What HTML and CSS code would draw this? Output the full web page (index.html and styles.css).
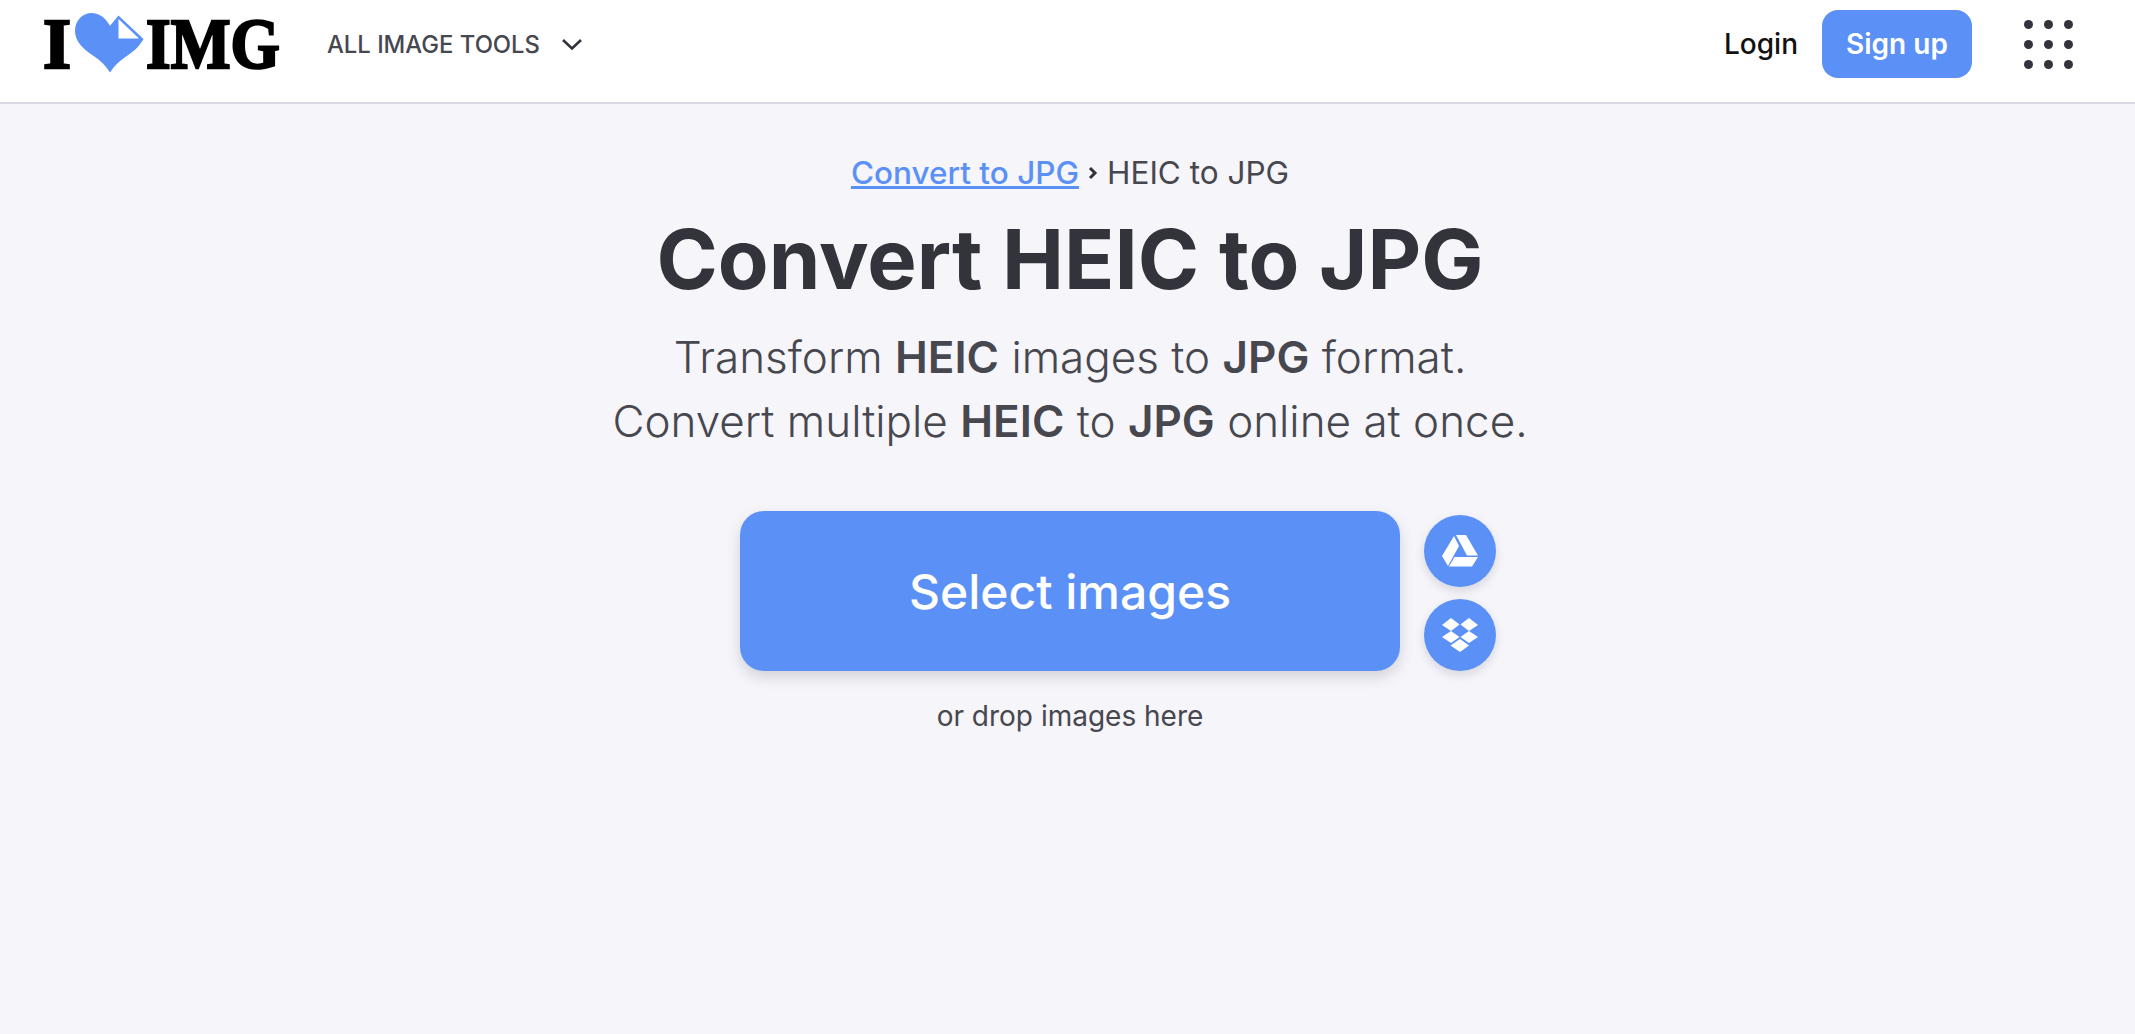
FILE: index.html
```html
<!DOCTYPE html>
<html lang="en">
<head>
  <meta charset="UTF-8">
  <meta name="viewport" content="width=device-width, initial-scale=1">
  <title>Convert HEIC to JPG</title>
  <link rel="stylesheet" href="styles.css">
</head>
<body>
  <header class="header">
    <a class="logo" href="#">
      <span class="logo-text logo-i">I</span>
      <svg class="logo-heart" width="70" height="60" viewBox="0 0 70 60">
        <path d="M35 12.7C30 4 23 0 16.7 0C7 0 0 8 0 18C0 27 6 35 18.3 42.7C25 47 31 53 35 59.5C39 53 44 48.5 50 44.3C58 39 64 34 68.5 26L43.5 2.5Z" fill="#5b91f7"/>
        <path d="M43.5 6L64 25.5H43.5Z" fill="#fff"/>
      </svg>
      <span class="logo-text logo-img">IMG</span>
    </a>
    <nav class="tools-menu">
      <span>ALL IMAGE TOOLS</span>
      <svg class="chevron" width="22" height="14" viewBox="0 0 22 14">
        <path d="M2 3l9 8.5L20 3" fill="none" stroke="#33333b" stroke-width="2.6"/>
      </svg>
    </nav>
    <div class="header-right">
      <a class="login" href="#">Login</a>
      <a class="signup" href="#">Sign up</a>
      <div class="apps">
        <i></i><i></i><i></i><i></i><i></i><i></i><i></i><i></i><i></i>
      </div>
    </div>
  </header>

  <main class="main">
    <div class="breadcrumb">
      <a href="#">Convert to JPG</a>
      <svg class="crumb-arrow" width="10" height="14" viewBox="0 0 10 14">
        <path d="M2 2l5 5-5 5" fill="none" stroke="#33333b" stroke-width="3"/>
      </svg>
      <span>HEIC to JPG</span>
    </div>
    <h1>Convert HEIC to JPG</h1>
    <p class="subtitle">Transform <b>HEIC</b> images to <b>JPG</b> format.<br>Convert multiple <b>HEIC</b> to <b>JPG</b> online at once.</p>

    <div class="upload">
      <a class="select-btn" href="#">Select images</a>
      <div class="cloud-btns">
        <a class="cloud-btn" href="#">
          <svg width="36" height="32" viewBox="0 0 36 32" fill="#fff">
            <path d="M12 1L17 11 6 31 0 21Z"/>
            <path d="M14 0H24L36 20.5H25Z"/>
            <path d="M12.5 22H36L30 31.500H7Z"/>
          </svg>
        </a>
        <a class="cloud-btn" href="#">
          <svg width="36" height="34" viewBox="0 0 36 34" fill="#fff">
            <path d="M0 7L9 0l8.500 6.500L9 13Z"/>
            <path d="M18.500 6.500L27 0l9 7-9 6Z"/>
            <path d="M0 19l9-6 8.500 6L9 25Z"/>
            <path d="M18.500 19l8.500-6 9 6-9 6Z"/>
            <path d="M18 21l9 6.500L18 34 8.500 27.500Z"/>
          </svg>
        </a>
      </div>
    </div>
    <p class="drop-hint">or drop images here</p>
  </main>
</body>
</html>
```

FILE: styles.css
```css
* {
  box-sizing: border-box;
}
html, body {
  height: 100%;
}
body {
  margin: 0;
  background-color: #f5f5fa;
  font-family: Inter, "Noto Sans", sans-serif;
  color: #47474f;
  overflow: hidden;
}
a {
  text-decoration: none;
}

/* Header */
.header {
  display: flex;
  align-items: center;
  height: 104px;
  padding: 0 0 14px 43px;
  background-color: #fff;
  border-bottom: 2px solid #d9d9e3;
}
.logo {
  display: flex;
  align-items: center;
  flex: none;
  width: 237px;
  height: 88px;
  color: #000;
}
.logo-text {
  flex: none;
  font-family: "Liberation Serif", serif;
  font-size: 72px;
  line-height: 1;
  font-weight: 700;
  -webkit-text-stroke: 2.5px #000;
  transform-origin: left center;
}
.logo-i {
  width: 32px;
}
.logo-img {
  transform: scaleX(0.88);
}
.logo-heart {
  margin: -2px 1px 0 0;
  flex: none;
}
.tools-menu {
  display: flex;
  align-items: center;
  margin-left: 47px;
  font-size: 23.8px;
  font-weight: 500;
}
.chevron {
  margin-left: 21px;
}
.header-right {
  display: flex;
  align-items: center;
  margin-left: auto;
  padding-right: 62px;
}
.login {
  font-size: 28px;
  font-weight: 500;
  color: #111;
}
.signup {
  display: flex;
  align-items: center;
  justify-content: center;
  width: 150px;
  height: 68px;
  margin-left: 24px;
  background-color: #5b91f7;
  border-radius: 16px;
  color: #fff;
  font-size: 28px;
  font-weight: 600;
}
.apps {
  display: grid;
  grid-template-columns: repeat(3, 9px);
  gap: 11px;
  margin-left: 52px;
}
.apps i {
  width: 9px;
  height: 9px;
  border-radius: 50%;
  background-color: #33333b;
}

/* Main */
.main {
  display: flex;
  flex-direction: column;
  align-items: center;
  padding: 47px 0 0 5px;
}
.breadcrumb {
  display: flex;
  align-items: center;
  height: 44px;
  font-size: 31.500px;
  line-height: 44px;
}
.breadcrumb a {
  color: #5b91f7;
  font-weight: 500;
  text-decoration: underline;
}
.crumb-arrow {
  margin: 0 9px 0 9px;
}
h1 {
  margin: 0;
  padding-top: 16px;
  font-size: 83px;
  line-height: 96px;
  font-weight: 700;
  color: #33333b;
}
.subtitle {
  margin: 18px 0 0;
  font-size: 44px;
  line-height: 64px;
  font-weight: 300;
  text-align: center;
}
.subtitle b {
  font-weight: 600;
}
.upload {
  display: grid;
  grid-template-columns: 1fr 660px 1fr;
  column-gap: 24px;
  width: 100%;
  margin-top: 58px;
}
.select-btn {
  grid-column: 2;
  display: flex;
  align-items: center;
  justify-content: center;
  height: 160px;
  background-color: #5b91f7;
  border-radius: 24px;
  box-shadow: 0 6px 14px rgba(70, 70, 90, 0.2);
  color: #fff;
  font-size: 48px;
  font-weight: 500;
}
.cloud-btns {
  display: flex;
  flex-direction: column;
  gap: 12px;
  padding-top: 4px;
}
.cloud-btn {
  display: flex;
  align-items: center;
  justify-content: center;
  width: 72px;
  height: 72px;
  background-color: #5b91f7;
  border-radius: 50%;
  box-shadow: 0 4px 10px rgba(70, 70, 90, 0.18);
}
.drop-hint {
  margin: 28px 0 0;
  font-size: 28px;
  line-height: 34px;
}
```
